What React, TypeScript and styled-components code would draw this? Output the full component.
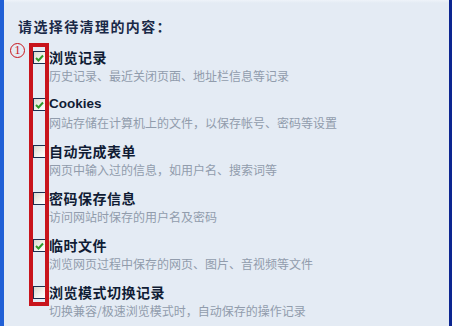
import React from "react";
import styled, { createGlobalStyle } from "styled-components";

const Global = createGlobalStyle`
  html, body { margin: 0; padding: 0; background: #e4ebf4; }
  * { box-sizing: border-box; }
`;

const Panel = styled.div`
  position: relative;
  width: 452px;
  height: 326px;
  overflow: hidden;
  background: linear-gradient(#eef3f9 0, #e4ebf4 3px);
  border-left: 4px solid #2160d6;
  border-right: 3px solid #0c2590;
  padding: 17px 0 0 14px;
  font-family: "Noto Sans CJK SC", sans-serif;
`;

const Title = styled.div`
  font-size: 14px;
  line-height: 18px;
  font-weight: 700;
  letter-spacing: 1.4px;
  color: #1a2947;
  margin-bottom: 13px;
`;

const List = styled.div`
  display: flex;
  flex-direction: column;
  padding-left: 15px;
`;

const Item = styled.div`
  display: grid;
  grid-template-columns: 13px 1fr;
  grid-template-rows: 18px 18px;
  align-content: start;
  column-gap: 3px;
  row-gap: 1px;
  height: 47px;
`;

const Box = styled.span<{ $checked?: boolean }>`
  width: 13px;
  height: 13px;
  margin-top: 3px;
  border: 1px solid #1d3050;
  background: linear-gradient(135deg, #d8d8d0 0%, #f4f4ef 60%, #ffffff 100%);
  display: flex;
  align-items: center;
  justify-content: center;
`;

const Label = styled.div<{ $latin?: boolean }>`
  font-family: ${(p) =>
    p.$latin ? '"Liberation Sans", Arial, sans-serif' : '"Noto Sans CJK SC", sans-serif'};
  font-size: ${(p) => (p.$latin ? "13.5px" : "14px")};
  letter-spacing: ${(p) => (p.$latin ? "0" : "0.5px")};
  font-weight: 700;
  line-height: 18px;
  color: #101c34;
  white-space: nowrap;
`;

const Desc = styled.div`
  grid-column: 2;
  font-size: 12px;
  line-height: 18px;
  color: #919cac;
  white-space: nowrap;
`;

const Frame = styled.div`
  position: absolute;
  left: 25px;
  top: 43px;
  width: 20px;
  height: 263px;
  border: 4px solid #c8141c;
`;

const Marker = styled.span`
  position: absolute;
  left: 6px;
  top: 43px;
  width: 15px;
  height: 15px;
  border: 1px solid #c8141c;
  border-radius: 50%;
  color: #c8141c;
  font-family: "Liberation Serif", serif;
  font-size: 12px;
  line-height: 13px;
  text-align: center;
`;

const Check = () => (
  <svg width="9" height="8" viewBox="0 0 9 8">
    <path d="M1 4 L3.5 6.5 L8 1.5" fill="none" stroke="#2f9a2a" strokeWidth="2" />
  </svg>
);

const items = [
  { label: "浏览记录", desc: "历史记录、最近关闭页面、地址栏信息等记录", checked: true },
  { label: "Cookies", desc: "网站存储在计算机上的文件，以保存帐号、密码等设置", checked: true, latin: true },
  { label: "自动完成表单", desc: "网页中输入过的信息，如用户名、搜索词等", checked: false },
  { label: "密码保存信息", desc: "访问网站时保存的用户名及密码", checked: false },
  { label: "临时文件", desc: "浏览网页过程中保存的网页、图片、音视频等文件", checked: true },
  { label: "浏览模式切换记录", desc: "切换兼容/极速浏览模式时，自动保存的操作记录", checked: false },
];

export default function App() {
  return (
    <>
      <Global />
      <Panel>
        <Title>请选择待清理的内容：</Title>
        <List>
          {items.map((it) => (
            <Item key={it.label}>
              <Box $checked={it.checked}>{it.checked && <Check />}</Box>
              <Label $latin={it.latin}>{it.label}</Label>
              <Desc>{it.desc}</Desc>
            </Item>
          ))}
        </List>
        <Marker>1</Marker>
        <Frame />
      </Panel>
    </>
  );
}
